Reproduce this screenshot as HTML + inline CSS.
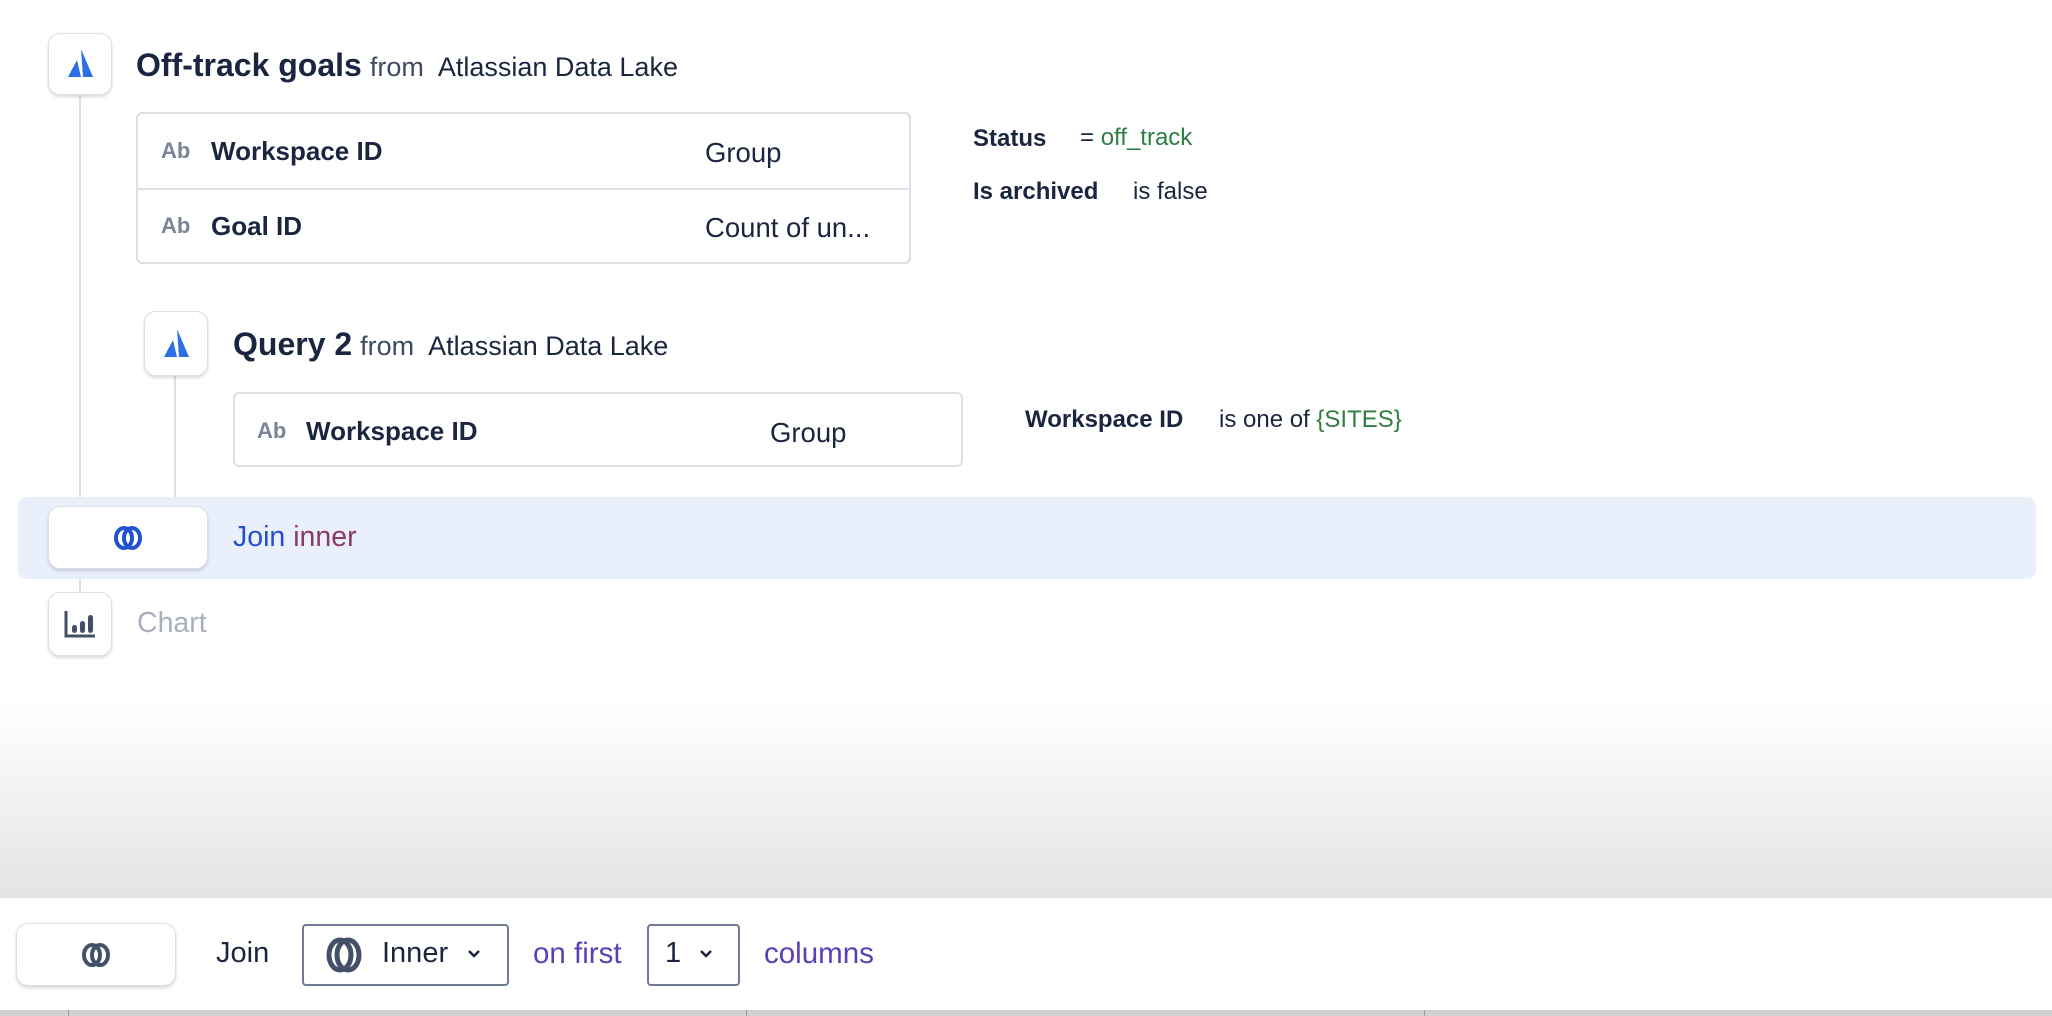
<!DOCTYPE html>
<html><head><meta charset="utf-8"><style>
*{box-sizing:border-box;margin:0;padding:0}
body{width:2052px;height:1016px;overflow:hidden;position:relative;background:#fff;font-family:"Liberation Sans",sans-serif;color:#1b2540}
.a{position:absolute;white-space:nowrap}
.box{position:absolute;background:#fff;border:1px solid #dcdfe6;border-radius:12px;box-shadow:0 2px 3px rgba(0,0,0,.15)}
.vl{position:absolute;width:2px;background:#dcdfe6}
.tbl{position:absolute;border:2px solid #dcdfe6;border-radius:6px;background:#fff}
.ab{color:#7b8497;font-weight:bold;font-size:22px}
.b{font-weight:bold}
.ctr{display:flex;align-items:center;justify-content:center}
.fr{font-size:27px;color:#3f4a60;margin-left:8px}
.src{font-size:27px;margin-left:14px}
</style></head><body>
<div style="position:absolute;left:0;top:700px;width:2052px;height:200px;background:linear-gradient(#fff,#e3e3e3)"></div>
<div class="vl" style="left:79px;top:94px;height:403px"></div>
<div class="vl" style="left:174px;top:376px;height:121px"></div>
<div class="vl" style="left:79px;top:579px;height:15px"></div>

<div class="box ctr" style="left:48px;top:33px;width:64px;height:62px"><svg width="28" height="30" viewBox="0 0 28 30"><path d="M15 0 L27 28 H17 Z M11 11 L15 28 H2 Z" fill="#2f6fe4"/></svg></div>
<div class="a" style="left:136px;top:47px;font-size:32px"><span class="b">Off-track goals</span><span class="fr">from</span><span class="src">Atlassian Data Lake</span></div>

<div class="tbl" style="left:136px;top:112px;width:775px;height:152px">
 <div style="position:absolute;left:0;right:0;top:74px;border-top:2px solid #dcdfe6"></div>
</div>
<div class="a ab" style="left:161px;top:138px">Ab</div>
<div class="a b" style="left:211px;top:136px;font-size:26px">Workspace ID</div>
<div class="a" style="left:705px;top:137px;font-size:27.5px">Group</div>
<div class="a ab" style="left:161px;top:213px">Ab</div>
<div class="a b" style="left:211px;top:211px;font-size:26px">Goal ID</div>
<div class="a" style="left:705px;top:212px;font-size:27.5px">Count of un...</div>

<div class="a b" style="left:973px;top:125px;font-size:24px">Status</div>
<div class="a" style="left:1080px;top:124px;font-size:24px">= <span style="color:#2f7d40">off_track</span></div>
<div class="a b" style="left:973px;top:178px;font-size:24px">Is archived</div>
<div class="a" style="left:1133px;top:178px;font-size:24px">is false</div>

<div class="box ctr" style="left:144px;top:311px;width:64px;height:65px"><svg width="28" height="30" viewBox="0 0 28 30"><path d="M15 0 L27 28 H17 Z M11 11 L15 28 H2 Z" fill="#2f6fe4"/></svg></div>
<div class="a" style="left:233px;top:326px;font-size:32px"><span class="b">Query 2</span><span class="fr">from</span><span class="src">Atlassian Data Lake</span></div>

<div class="tbl" style="left:233px;top:392px;width:730px;height:75px"></div>
<div class="a ab" style="left:257px;top:418px">Ab</div>
<div class="a b" style="left:306px;top:416px;font-size:26px">Workspace ID</div>
<div class="a" style="left:770px;top:417px;font-size:27.5px">Group</div>

<div class="a b" style="left:1025px;top:406px;font-size:24px">Workspace ID</div>
<div class="a" style="left:1219px;top:406px;font-size:24px">is one of <span style="color:#2f7d40">{SITES}</span></div>

<div style="position:absolute;left:18px;top:497px;width:2018px;height:82px;background:#e9f0fc;border-radius:9px"></div>
<div class="box ctr" style="left:48px;top:506px;width:160px;height:63px"><svg width="36" height="28" viewBox="0 0 36 28"><ellipse cx="14" cy="14" rx="8" ry="10" fill="none" stroke="#2352d1" stroke-width="4"/><ellipse cx="22" cy="14" rx="8" ry="10" fill="none" stroke="#2352d1" stroke-width="4"/></svg></div>
<div class="a" style="left:233px;top:521px;font-size:28.5px"><span style="color:#2450c8">Join</span> <span style="color:#8a3a63">inner</span></div>

<div class="box ctr" style="left:48px;top:592px;width:64px;height:64px"><svg width="34" height="30" viewBox="0 0 34 30"><path d="M3 2 V27 H32" fill="none" stroke="#435068" stroke-width="3"/><rect x="9" y="16" width="5" height="8" rx="2.5" fill="#435068"/><rect x="17" y="12" width="5" height="12" rx="2.5" fill="#435068"/><rect x="25" y="6" width="5" height="18" rx="2.5" fill="#435068"/></svg></div>
<div class="a" style="left:137px;top:607px;font-size:28.5px;color:#a9afbd">Chart</div>

<div style="position:absolute;left:0;top:898px;width:2052px;height:112px;background:#fff"></div>
<div style="position:absolute;left:0;top:1010px;width:2052px;height:6px;background:#d0d0d0"></div>
<div class="box ctr" style="left:16px;top:923px;width:160px;height:63px"><svg width="36" height="28" viewBox="0 0 36 28"><ellipse cx="14" cy="14" rx="8" ry="10" fill="none" stroke="#435068" stroke-width="4"/><ellipse cx="22" cy="14" rx="8" ry="10" fill="none" stroke="#435068" stroke-width="4"/></svg></div>
<div class="a" style="left:216px;top:937px;font-size:29px">Join</div>
<div style="position:absolute;left:302px;top:924px;width:207px;height:62px;border:2px solid #6f7a93;border-radius:4px"></div>
<svg class="a" style="left:323px;top:936px" width="42" height="38" viewBox="0 0 42 38"><ellipse cx="17" cy="19" rx="11" ry="15" fill="none" stroke="#435068" stroke-width="5"/><ellipse cx="25" cy="19" rx="11" ry="15" fill="none" stroke="#435068" stroke-width="5"/></svg>
<div class="a" style="left:382px;top:937px;font-size:29px">Inner</div>
<svg class="a" style="left:467px;top:948px" width="14" height="12" viewBox="0 0 14 12"><path d="M2 3 L7 8 L12 3" fill="none" stroke="#1b2540" stroke-width="2.5"/></svg>
<div class="a" style="left:533px;top:937px;font-size:29.5px;color:#5b3fb5">on first</div>
<div style="position:absolute;left:647px;top:924px;width:93px;height:62px;border:2px solid #6f7a93;border-radius:4px"></div>
<div class="a" style="left:665px;top:937px;font-size:29px">1</div>
<svg class="a" style="left:699px;top:948px" width="14" height="12" viewBox="0 0 14 12"><path d="M2 3 L7 8 L12 3" fill="none" stroke="#1b2540" stroke-width="2.5"/></svg>
<div class="a" style="left:764px;top:937px;font-size:29.5px;color:#5b3fb5">columns</div>
<div style="position:absolute;left:68px;top:1010px;width:1px;height:6px;background:#999"></div>
<div style="position:absolute;left:746px;top:1010px;width:1px;height:6px;background:#999"></div>
<div style="position:absolute;left:1424px;top:1010px;width:1px;height:6px;background:#999"></div>
</body></html>
